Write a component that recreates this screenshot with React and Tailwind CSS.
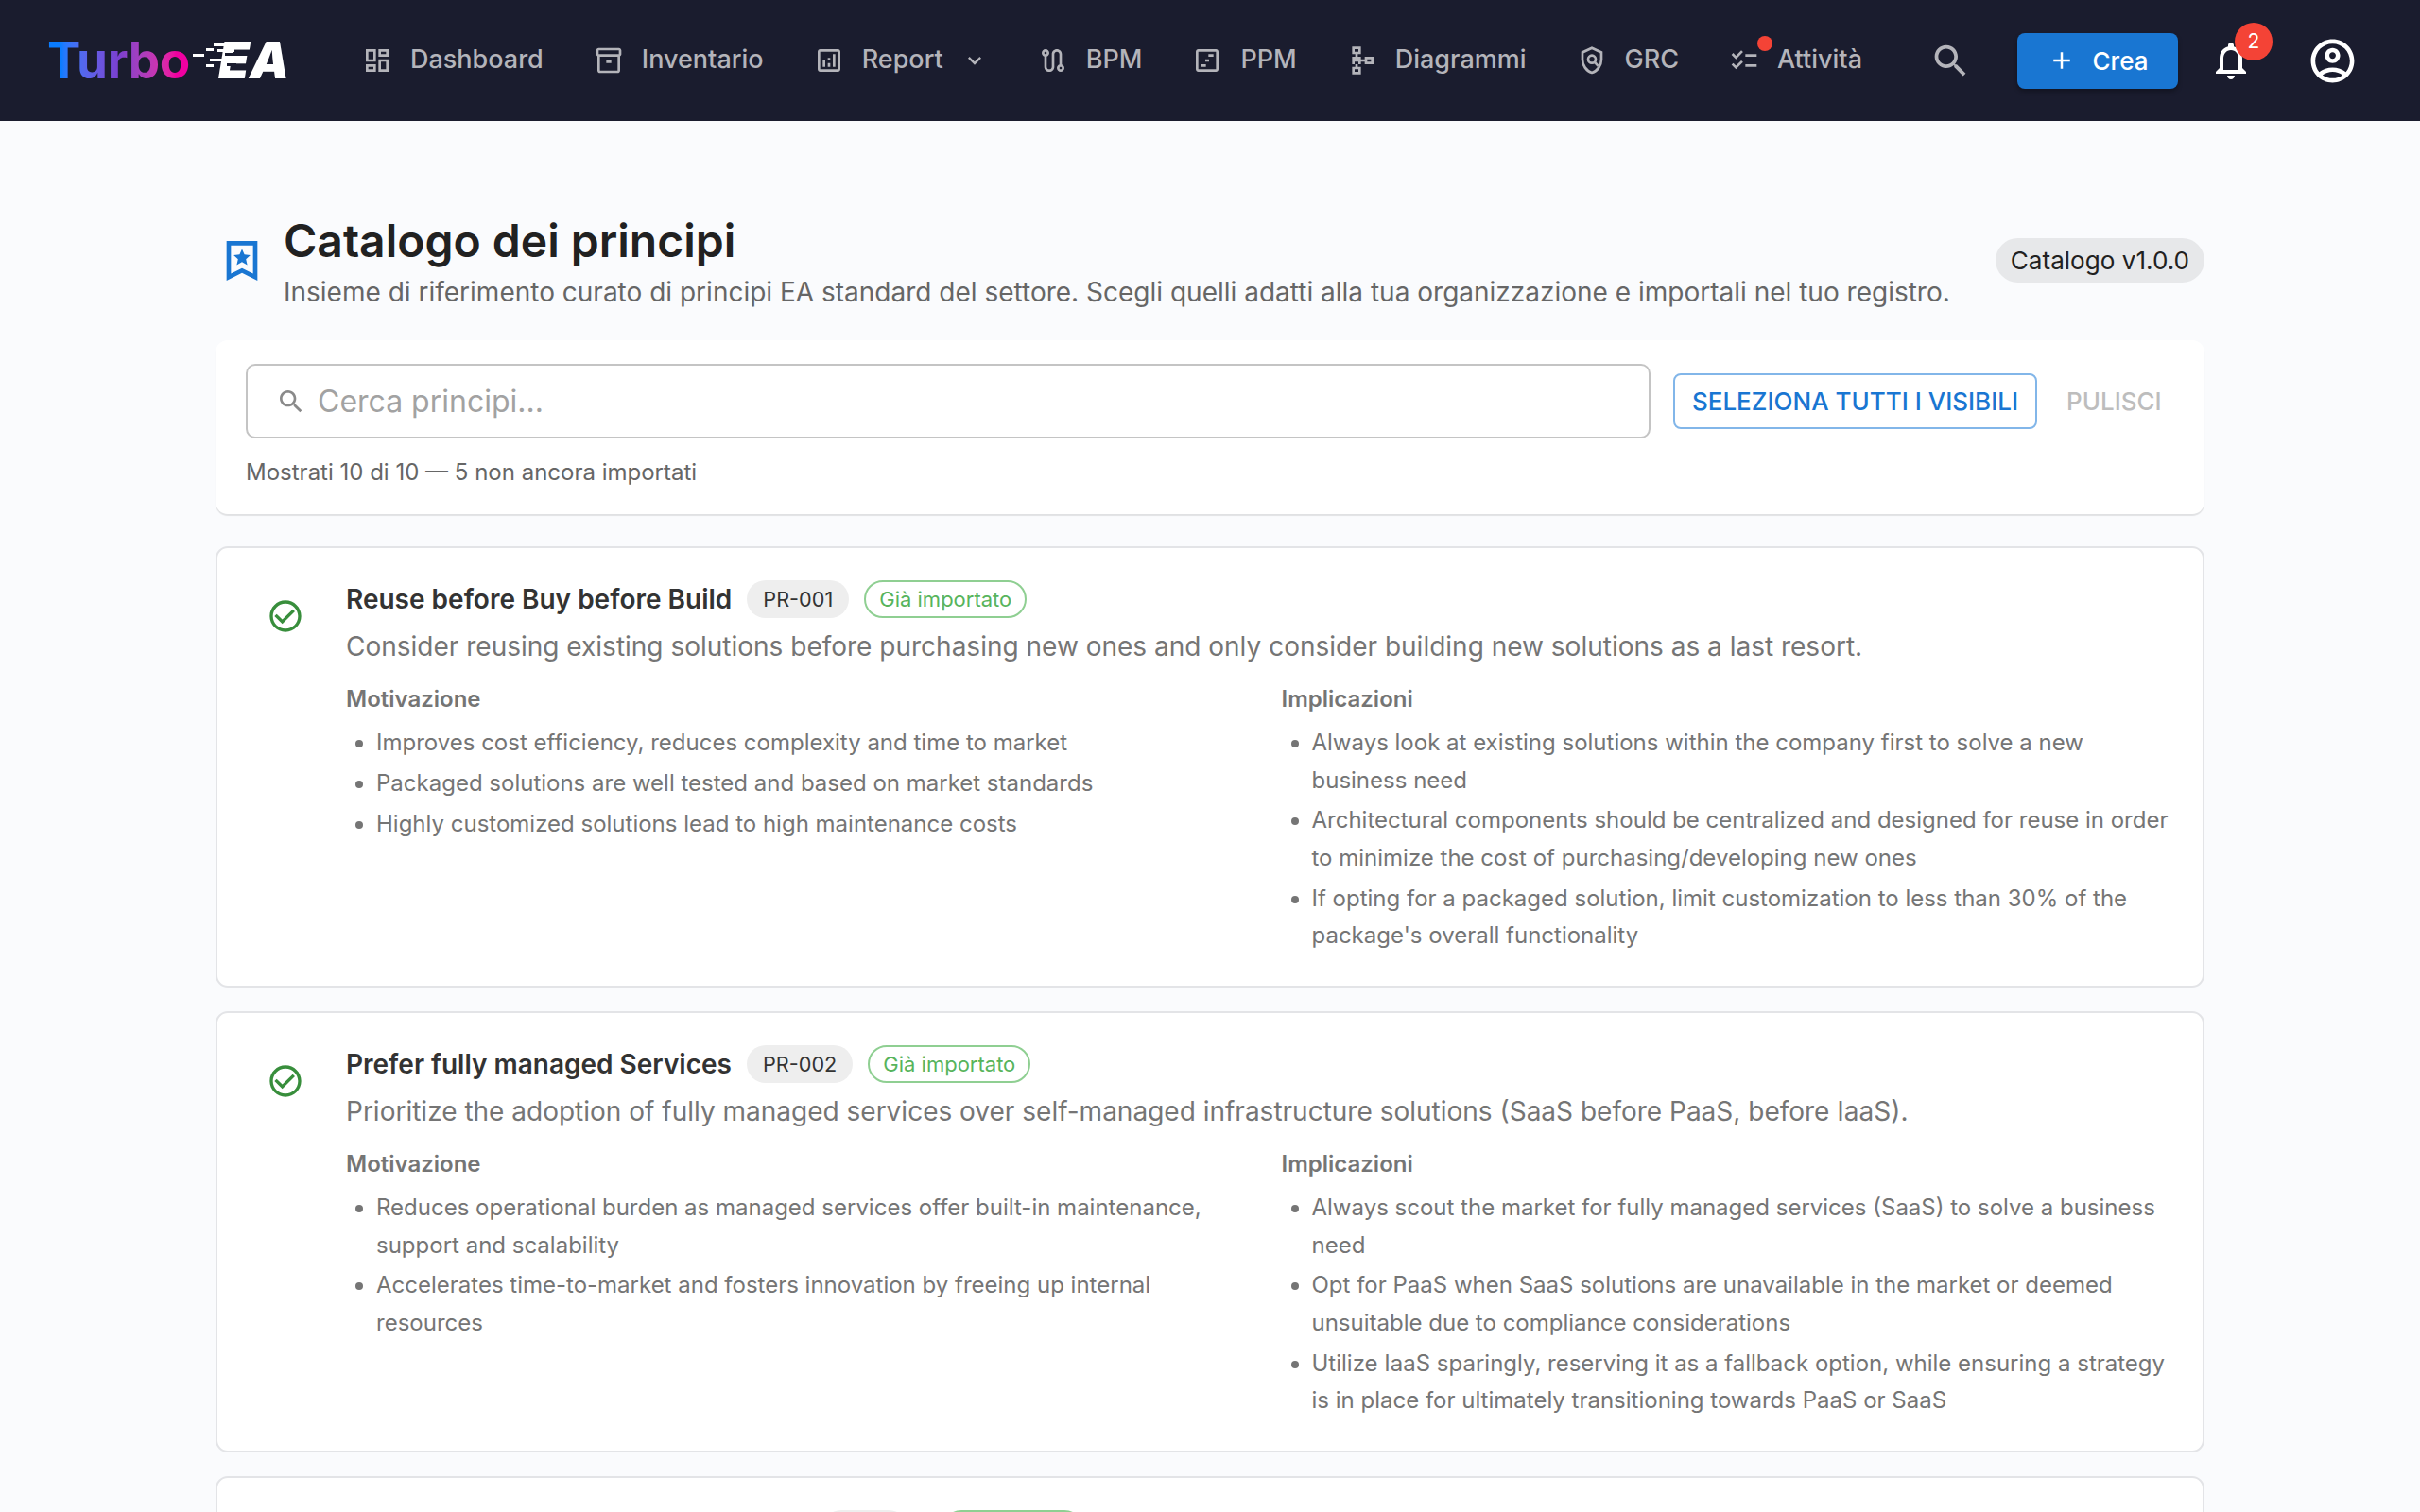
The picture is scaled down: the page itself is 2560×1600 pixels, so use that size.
const icons = {
  dashboard: "M19 5v2h-4V5h4M9 5v6H5V5h4m10 8v6h-4v-6h4M9 17v2H5v-2h4M21 3h-8v6h8V3zM11 3H3v10h8V3zm10 8h-8v10h8V11zm-10 4H3v6h8v-6z",
  inventory: "M20 2H4c-1 0-2 .9-2 2v3.01c0 .72.43 1.34 1 1.69V20c0 1.1 1.1 2 2 2h14c.9 0 2-.9 2-2V8.7c.57-.35 1-.97 1-1.69V4c0-1.1-1-2-2-2zm-1 18H5V9h14v11zm1-13H4V4h16v3zM10 12h4v2h-4z",
  report: "M19 3H5c-1.1 0-2 .9-2 2v14c0 1.1.9 2 2 2h14c1.1 0 2-.9 2-2V5c0-1.1-.9-2-2-2zm0 16H5V5h14v14zM7 12h2v5H7zm8-5h2v10h-2zm-4 7h2v3h-2zm0-4h2v2h-2z",
  route: "M19 15.18V7c0-2.21-1.79-4-4-4s-4 1.79-4 4v10c0 1.1-.9 2-2 2s-2-.9-2-2V8.82C8.16 8.4 9 7.3 9 6c0-1.66-1.34-3-3-3S3 4.34 3 6c0 1.3.84 2.4 2 2.82V17c0 2.21 1.79 4 4 4s4-1.79 4-4V7c0-1.1.9-2 2-2s2 .9 2 2v8.18c-1.16.41-2 1.51-2 2.82 0 1.66 1.34 3 3 3s3-1.34 3-3c0-1.3-.84-2.4-2-2.82zM6 5c.55 0 1 .45 1 1s-.45 1-1 1-1-.45-1-1 .45-1 1-1zm12 14c-.55 0-1-.45-1-1s.45-1 1-1 1 .45 1 1-.45 1-1 1z",
  timeline: "M19 3H5c-1.1 0-2 .9-2 2v14c0 1.1.9 2 2 2h14c1.1 0 2-.9 2-2V5c0-1.1-.9-2-2-2zm0 16H5V5h14v14zM7 15h4v2H7zm3.5-4h3v2h-3zM13 7h4v2h-4z",
  schema: "M14 9v2h-3V9H8.5V7H11V1H4v6h2.5v2H4v6h2.5v2H4v6h7v-6H8.5v-2H11v-2h3v2h7V9h-7zM9 3v2H6V3h3zm0 12H6v-2h3v2zm0 6H6v-2h3v2zm10-8h-3v-2h3v2z",
  checklist: "M22 7h-9v2h9V7zm0 8h-9v2h9v-2zM5.54 11 2 7.46l1.41-1.41 2.12 2.12 4.24-4.24 1.41 1.41L5.54 11zm0 8L2 15.46l1.41-1.41 2.12 2.12 4.24-4.24 1.41 1.41L5.54 19z",
  search: "M15.5 14h-.79l-.28-.27C15.41 12.59 16 11.11 16 9.5 16 5.91 13.09 3 9.5 3S3 5.91 3 9.5 5.91 16 9.5 16c1.61 0 3.09-.59 4.23-1.57l.27.28v.79l5 4.99L20.49 19l-4.99-5zm-6 0C7.01 14 5 11.99 5 9.5S7.01 5 9.5 5 14 7.01 14 9.5 11.99 14 9.5 14z",
  plus: "M19 13h-6v6h-2v-6H5v-2h6V5h2v6h6v2z",
  bell: "M12 22c1.1 0 2-.9 2-2h-4c0 1.1.9 2 2 2zm6-6v-5c0-3.07-1.63-5.64-4.5-6.32V4c0-.83-.67-1.5-1.5-1.5s-1.5.67-1.5 1.5v.68C7.64 5.36 6 7.92 6 11v5l-2 2v1h16v-1l-2-2zm-2 1H8v-6c0-2.48 1.51-4.5 4-4.5s4 2.02 4 4.5v6z",
  user: "M12 2C6.48 2 2 6.48 2 12s4.48 10 10 10 10-4.48 10-10S17.52 2 12 2zM7.35 18.5C8.66 17.56 10.26 17 12 17s3.34.56 4.65 1.5c-1.31.94-2.91 1.5-4.65 1.5s-3.34-.56-4.65-1.5zm10.79-1.38C16.45 15.8 14.32 15 12 15s-4.45.8-6.14 2.12C4.7 15.73 4 13.95 4 12c0-4.42 3.58-8 8-8s8 3.58 8 8c0 1.95-.7 3.73-1.86 5.12zM12 6c-1.93 0-3.5 1.57-3.5 3.5S10.07 13 12 13s3.5-1.57 3.5-3.5S13.93 6 12 6zm0 5c-.83 0-1.5-.67-1.5-1.5S11.17 8 12 8s1.5.67 1.5 1.5S12.83 11 12 11z",
  chevron: "M16.59 8.59 12 13.17 7.41 8.59 6 10l6 6 6-6z",
  bookmark: "M5 3h14v18l-7-3.5L5 21V3zm2 2v12.8l5-2.5 5 2.5V5H7zM12 6.6l1.1 2.5 2.7.3-2 1.8.6 2.7-2.4-1.4-2.4 1.4.6-2.7-2-1.8 2.7-.3z",
  check: "M16.59 7.58 10 14.17l-3.59-3.58L5 12l5 5 8-8zM12 2C6.48 2 2 6.48 2 12s4.48 10 10 10 10-4.48 10-10S17.52 2 12 2zm0 18c-4.42 0-8-3.58-8-8s3.58-8 8-8 8 3.58 8 8-3.58 8-8 8z",
};

function Icon({ name, className }) {
  return (
    <svg viewBox="0 0 24 24" fill="currentColor" fillRule="evenodd" className={className}>
      <path d={icons[name]} />
    </svg>
  );
}

function PolicyIcon({ className }) {
  return (
    <svg viewBox="0 0 24 24" fill="none" stroke="currentColor" strokeWidth="2" className={className}>
      <path d="M12 2.1 4.5 5.6v5.6c0 4.7 3.1 9.2 7.5 10.5 4.4-1.3 7.5-5.8 7.5-10.5V5.6z" />
      <circle cx="12" cy="11" r="3" />
      <path d="m14 13.2 3 3.2" />
    </svg>
  );
}

function Logo() {
  return (
    <div className="relative flex h-[64px] w-[255px] shrink-0 items-center">
      <span className="bg-linear-to-r from-[#0a7cff] from-10% via-[#7a3fd0] via-50% to-[#f000a0] to-90% bg-clip-text text-[53px] leading-none font-bold tracking-[-0.4px] text-transparent">
        Turbo
      </span>
      <span className="absolute left-[181px] text-[53px] leading-none font-black text-white italic">EA</span>
      <svg viewBox="0 0 60 40" className="absolute top-[8px] left-[154px] h-[40px] w-[60px]">
        <path d="M22 6h12v3H22zM14 11h8v3h-8zM26 12h18v3H26zM0 17h12v3H0zM18 22h14v3H18zM14 28h8v3h-8z" fill="#ffffff" />
        <path d="M34 16h14v3H34zM36 27h10v3H36z" fill="#1a1c2e" />
      </svg>
    </div>
  );
}

function NavItem({ icon, label, chevron, dot }) {
  return (
    <div className="relative flex items-center gap-[19px] text-[27px] leading-none font-medium text-[#b4b4ba]">
      {icon}
      <span className="pb-[3px]">{label}</span>
      {chevron && <Icon name="chevron" className="size-[28px]" />}
      {dot && <span className="absolute top-[-10px] left-[30px] size-[16px] rounded-full bg-[#f44336]" />}
    </div>
  );
}

function Header() {
  const iconCls = "size-[32px] shrink-0";
  return (
    <header className="flex h-[128px] items-center bg-[#1a1c2e] pl-[50px]">
      <Logo />
      <nav className="ml-[78px] flex items-center gap-[53px]">
        <NavItem icon={<Icon name="dashboard" className={iconCls} />} label="Dashboard" />
        <NavItem icon={<Icon name="inventory" className={iconCls} />} label="Inventario" />
        <NavItem icon={<Icon name="report" className={iconCls} />} label="Report" chevron />
        <NavItem icon={<Icon name="route" className={iconCls} />} label="BPM" />
        <NavItem icon={<Icon name="timeline" className={iconCls} />} label="PPM" />
        <NavItem icon={<Icon name="schema" className={iconCls} />} label="Diagrammi" />
        <NavItem icon={<PolicyIcon className={iconCls} />} label="GRC" />
        <NavItem icon={<Icon name="checklist" className={iconCls} />} label="Attività" dot />
      </nav>
      <Icon name="search" className="ml-[71px] size-[45px] text-[#b4b4ba]" />
      <button className="ml-[48px] flex h-[59px] w-[170px] items-center justify-center gap-[18px] rounded-[8px] bg-[#1976d2] text-[26px] font-medium text-white shadow-[0_3px_5px_rgba(0,0,0,0.3)]">
        <Icon name="plus" className="size-[30px]" />
        Crea
      </button>
      <div className="relative ml-[32px]">
        <Icon name="bell" className="size-[48px] text-white" />
        <span className="absolute top-[-16px] left-[28px] flex size-[40px] items-center justify-center rounded-full bg-[#f44336] text-[21px] text-white">
          2
        </span>
      </div>
      <Icon name="user" className="ml-[56px] size-[55px] text-white" />
    </header>
  );
}

const principles = [
  {
    title: "Reuse before Buy before Build",
    id: "PR-001",
    desc: "Consider reusing existing solutions before purchasing new ones and only consider building new solutions as a last resort.",
    why: [
      "Improves cost efficiency, reduces complexity and time to market",
      "Packaged solutions are well tested and based on market standards",
      "Highly customized solutions lead to high maintenance costs",
    ],
    impl: [
      "Always look at existing solutions within the company first to solve a new business need",
      "Architectural components should be centralized and designed for reuse in order to minimize the cost of purchasing/developing new ones",
      "If opting for a packaged solution, limit customization to less than 30% of the package's overall functionality",
    ],
  },
  {
    title: "Prefer fully managed Services",
    id: "PR-002",
    desc: "Prioritize the adoption of fully managed services over self-managed infrastructure solutions (SaaS before PaaS, before IaaS).",
    why: [
      "Reduces operational burden as managed services offer built-in maintenance, support and scalability",
      "Accelerates time-to-market and fosters innovation by freeing up internal resources",
    ],
    impl: [
      "Always scout the market for fully managed services (SaaS) to solve a business need",
      "Opt for PaaS when SaaS solutions are unavailable in the market or deemed unsuitable due to compliance considerations",
      "Utilize IaaS sparingly, reserving it as a fallback option, while ensuring a strategy is in place for ultimately transitioning towards PaaS or SaaS",
    ],
  },
];

function BulletList({ heading, items }) {
  return (
    <div>
      <div className="text-[24px] leading-[39px] font-semibold text-[#757575]">{heading}</div>
      <ul className="mt-[7px] list-disc pl-[32px] text-[24px] leading-[39.5px] text-[#757575]">
        {items.map((t) => (
          <li key={t} className="mb-[3.3px]">
            {t}
          </li>
        ))}
      </ul>
    </div>
  );
}

function PrincipleCard({ p }) {
  return (
    <div className="flex h-[467px] shrink-0 rounded-[13px] border-2 border-[#e3e4e7] bg-white pt-[34px] pr-[25px] pl-[52px]">
      <Icon name="check" className="mt-[18px] size-[40px] shrink-0 text-[#388e3c]" />
      <div className="ml-[44px] min-w-0 flex-1">
        <div className="flex h-[40px] items-center">
          <span className="text-[28px] font-semibold text-[#333333]">{p.title}</span>
          <span className="ml-[16px] flex h-[40px] items-center rounded-full bg-[#eeeeee] px-[17px] text-[21.7px] text-[#333333]">
            {p.id}
          </span>
          <span className="ml-[16px] flex h-[40px] items-center rounded-full border-2 border-[#8fcf92] px-[14px] text-[22px] text-[#57b45c]">
            Già importato
          </span>
        </div>
        <p className="mt-[9px] text-[28px] leading-[42px] text-[#757575]">{p.desc}</p>
        <div className="mt-[15px] grid grid-cols-2 gap-[40px]">
          <BulletList heading="Motivazione" items={p.why} />
          <BulletList heading="Implicazioni" items={p.impl} />
        </div>
      </div>
    </div>
  );
}

export default function App() {
  return (
    <div className="h-[1600px] overflow-hidden bg-[#fafbfd] [font-family:Inter,sans-serif]">
      <Header />
      <main className="mx-auto w-[2104px]">
        <div className="mt-[98px] flex h-[134px] items-start">
          <Icon name="bookmark" className="mt-[22px] size-[56px] shrink-0 text-[#1976d2]" />
          <div className="ml-[16px] min-w-0 flex-1">
            <h1 className="text-[48px] leading-[58px] font-semibold text-[#212121]">Catalogo dei principi</h1>
            <p className="mt-[5px] text-[28px] leading-[40px] text-[#666666]">
              Insieme di riferimento curato di principi EA standard del settore. Scegli quelli adatti alla tua organizzazione e importali nel tuo registro.
            </p>
          </div>
          <span className="mt-[26px] flex h-[47px] items-center rounded-full bg-[#e7e8ea] px-[16px] text-[26.1px] whitespace-nowrap text-[#212121]">
            Catalogo v1.0.0
          </span>
        </div>

        <section className="h-[184px] rounded-[13px] bg-white pt-[25px] pl-[32px] shadow-[0_2px_1px_rgba(0,0,0,0.1)]">
          <div className="flex items-center">
            <div className="flex h-[79px] w-[1486px] items-center rounded-[10px] border-2 border-[#c4c4c4] pl-[30px]">
              <Icon name="search" className="size-[32px] text-[#8a8a8a]" />
              <span className="ml-[12px] text-[32px] text-[#a2a2a2]">Cerca principi...</span>
            </div>
            <button className="ml-[24px] flex h-[59px] w-[385px] items-center justify-center rounded-[8px] border-2 border-[#82b6e9] text-[26px] font-medium text-[#1976d2]">
              SELEZIONA TUTTI I VISIBILI
            </button>
            <span className="ml-[31px] text-[26px] font-medium text-[#bdbdbd]">PULISCI</span>
          </div>
          <div className="mt-[18px] text-[24px] leading-[36px] text-[#666666]">Mostrati 10 di 10 — 5 non ancora importati</div>
        </section>

        <div className="mt-[34px] flex flex-col gap-[25px]">
          {principles.map((p) => (
            <PrincipleCard key={p.id} p={p} />
          ))}
          {/* next card is cut off by the window, only the chip tops show */}
          <div className="h-[467px] shrink-0 rounded-[13px] border-2 border-[#e3e4e7] bg-white">
            <div className="mt-[34px] ml-[640px] flex gap-[37px]">
              <span className="h-[40px] w-[90px] rounded-full bg-[#eeeeee]" />
              <span className="h-[40px] w-[149px] rounded-full border-2 border-[#8fcf92]" />
            </div>
          </div>
        </div>
      </main>
    </div>
  );
}
